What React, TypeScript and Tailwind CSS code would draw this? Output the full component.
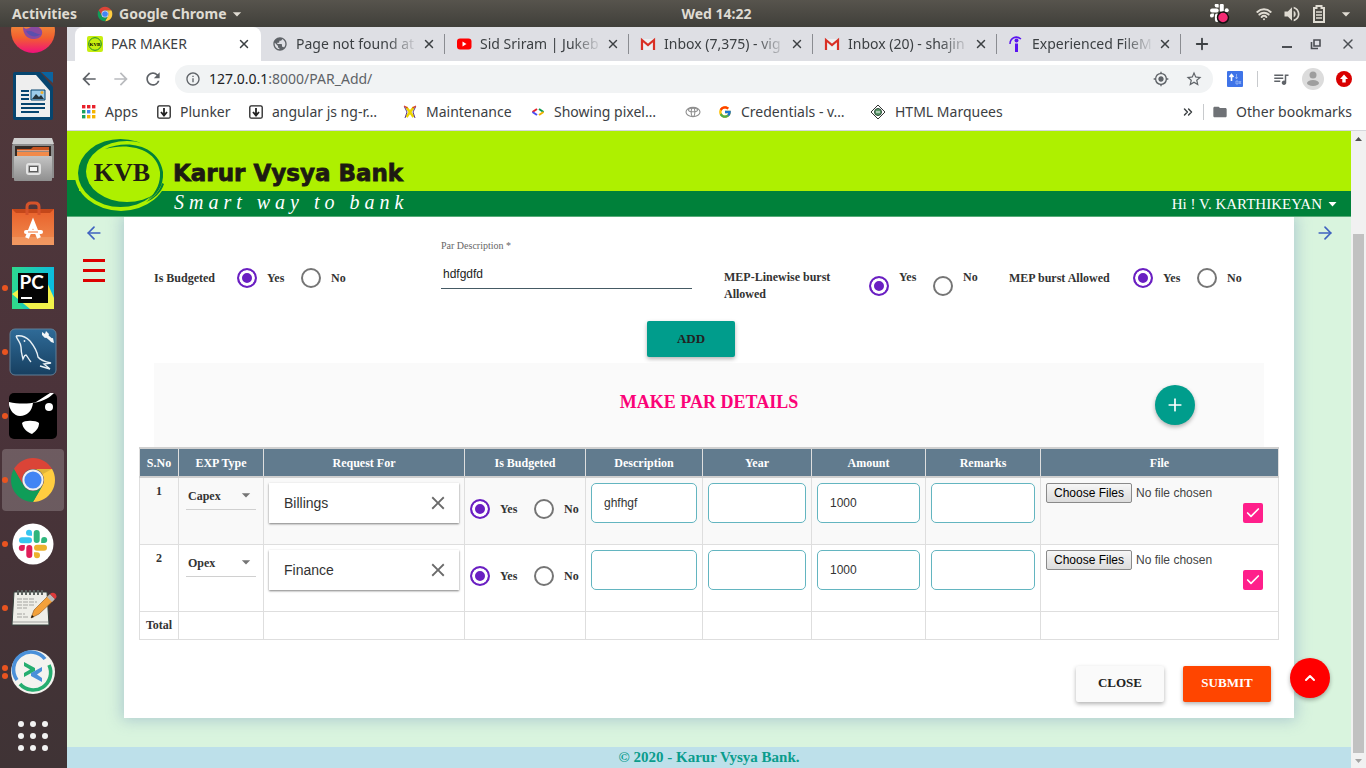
import React from "react";
import { ArrowLeft, ArrowRight, Check, ChevronUp, ChevronsRight, Plus, Wifi, X } from "lucide-react";
import { FcGoogle } from "react-icons/fc";
import {
  MdArrowBack,
  MdArrowDropDown,
  MdArrowForward,
  MdClose,
  MdFolder,
  MdGpsFixed,
  MdInfoOutline,
  MdOutlineStarBorder,
  MdPublic,
  MdQueueMusic,
  MdRefresh,
  MdVolumeUp,
} from "react-icons/md";

/* ---------- drawn icons ---------- */

function ChromeLogo({ className }: { className: string }) {
  const sector = "M4.95 13A22 22 0 0 1 43.05 13L24 13A11 11 0 0 0 14.47 29.5Z";
  return (
    <svg viewBox="0 0 48 48" className={className} aria-hidden="true">
      <path d={sector} fill="#db4437" />
      <path d={sector} fill="#ffcd40" transform="rotate(120 24 24)" />
      <path d={sector} fill="#0f9d58" transform="rotate(240 24 24)" />
      <path d="M24 13h19l-9 5z" fill="#000" opacity=".12" />
      <circle cx="24" cy="24" r="10.6" fill="#f1f1f1" />
      <circle cx="24" cy="24" r="8.6" fill="#4285f4" />
    </svg>
  );
}

function SlackMark({ colours }: { colours: string[] }) {
  return (
    <>
      {colours.map((c, i) => (
        <g key={i} fill={c} transform={`rotate(${i * 90} 24 24)`}>
          <rect x="24.7" y="10" width="6" height="13" rx="3" />
          <path d="M32.2 23v-3a3 3 0 1 1 3 3z" />
        </g>
      ))}
    </>
  );
}

const slackColours = ["#2eb67d", "#ecb22e", "#e01e5a", "#36c5f0"];

function FirefoxIcon() {
  return (
    <svg viewBox="0 0 48 48" className="size-12 shrink-0" aria-hidden="true">
      <defs>
        <linearGradient id="fx" x1="0" y1="0" x2="0" y2="1">
          <stop offset="0.3" stopColor="#f0913b" />
          <stop offset="0.65" stopColor="#f2602f" />
          <stop offset="1" stopColor="#f0107c" />
        </linearGradient>
      </defs>
      <circle cx="24" cy="24" r="22" fill="url(#fx)" />
      <path d="M14 20c4 4 6 0 11-1 5 0 9 3 8 8-1 4-5 5-9 5-6 0-10-5-10-12z" fill="#8a4aa0" />
      <path d="M17 24c3 6 10 7 15 3-5 1-8-4-15-3z" fill="#5a4fae" />
    </svg>
  );
}

function WriterIcon() {
  return (
    <svg viewBox="0 0 48 52" className="h-[52px] w-12" aria-hidden="true">
      <path d="M6 2h25l13 15v31a2 2 0 0 1-2 2H6a2 2 0 0 1-2-2V4a2 2 0 0 1 2-2z" fill="#06456f" />
      <path d="M32 2h12v11z" fill="#0b64a0" />
      <path d="M7 5h20l14 16v26H7z" fill="#eeeeee" />
      <path d="M12 21h8M12 25h8M12 29h8M12 34h24M12 38h24M12 42h18" stroke="#06456f" strokeWidth="2" />
      <path d="M22 20h14v10H22z" fill="#9ccbea" stroke="#06456f" />
      <path d="M23 29l4-5 3 3 2-2 3 4z" fill="#26343c" />
      <circle cx="33" cy="22.5" r="1.5" fill="#f0b030" />
    </svg>
  );
}

function FilesIcon() {
  return (
    <svg viewBox="0 0 48 48" className="size-12" aria-hidden="true">
      <defs>
        <linearGradient id="cab" x1="0" y1="0" x2="0" y2="1">
          <stop offset="0" stopColor="#c4c4c4" />
          <stop offset="1" stopColor="#8f8f8f" />
        </linearGradient>
      </defs>
      <path d="M5 4h38l2 6v32H3V10z" fill="#8e8e8e" />
      <path d="M5 2h38l2 6H3z" fill="#cfcfcf" />
      <path d="M6 10h36v12H6z" fill="#332a26" />
      <path d="M8 13h14l2-2h16v4H8z" fill="#c95420" />
      <path d="M8 16h32v5H8z" fill="#f28a4a" />
      <path d="M8 15h32" stroke="#ffe6d6" />
      <rect x="5" y="20" width="38" height="25" rx="1" fill="url(#cab)" />
      <rect x="18" y="28" width="13" height="10" rx="2" fill="none" stroke="#e4e4e4" strokeWidth="2" />
      <rect x="20.5" y="30.5" width="8" height="5" fill="#f5f5f5" stroke="#5c5c5c" />
    </svg>
  );
}

function SoftwareIcon() {
  return (
    <svg viewBox="0 0 48 48" className="size-12" aria-hidden="true">
      <defs>
        <linearGradient id="bag" x1="0" y1="0" x2="0" y2="1">
          <stop offset="0" stopColor="#e8602a" />
          <stop offset="1" stopColor="#f08c50" />
        </linearGradient>
      </defs>
      <path d="M3 9h42v36H3z" fill="url(#bag)" />
      <path d="M3 9h42l-4 4H7z" fill="#c4471a" />
      <path d="M3 37h42v8H3z" fill="#f2a06c" opacity=".6" />
      <path d="M18 15V7q0-4 4-4h4q4 0 4 4v8" fill="none" stroke="#d5532a" strokeWidth="3" />
      <path d="M18 38l6-15 6 15" fill="none" stroke="#fff" strokeWidth="4" />
      <path d="M17 32h15" stroke="#fff" strokeWidth="4" strokeLinecap="round" />
      <path d="M19 32h10" stroke="#f07030" />
    </svg>
  );
}

function PyCharmIcon() {
  return (
    <svg viewBox="0 0 48 48" className="size-12" aria-hidden="true">
      <defs>
        <linearGradient id="pc" x1="0" y1="0" x2="1" y2="0.2">
          <stop offset="0" stopColor="#2fd98c" />
          <stop offset="1" stopColor="#0bbde0" />
        </linearGradient>
      </defs>
      <path d="M3 3h42v42H3z" fill="url(#pc)" />
      <path d="M3 30l20-14h14l8 18v11H21z" fill="#f2f24a" />
      <path d="M3 33l12 12H3z" fill="#2fd98c" />
      <path d="M9 9h30v30H9z" fill="#050505" />
      <text x="10.5" y="25" fontFamily="Lato, sans-serif" fontWeight="700" fontSize="19" fill="#fff">PC</text>
      <path d="M12 34h11" stroke="#fff" strokeWidth="2" />
    </svg>
  );
}

function WorkbenchIcon() {
  return (
    <svg viewBox="0 0 48 48" className="size-12" aria-hidden="true">
      <defs>
        <linearGradient id="wb" x1="0" y1="0" x2="0" y2="1">
          <stop offset="0" stopColor="#2f6b98" />
          <stop offset="1" stopColor="#173f60" />
        </linearGradient>
      </defs>
      <rect x="1" y="1" width="46" height="46" rx="5" fill="url(#wb)" stroke="#5f7f97" />
      <path
        d="M7 8c5-1 10 1 14 5 4 5 7 9 8 16 3 4 8 5 13 6l-7 1 6 5-10-3M7 8c2 5 5 7 5 11 0 5 1 8 2 12 1-2 1-4 3-4 2 2 3 5 5 7"
        fill="none"
        stroke="#e8f0f5"
        strokeWidth="1.4"
      />
      <circle cx="15.5" cy="13" r=".9" fill="#e8f0f5" />
      <path d="M36 6.500l7 6" stroke="#f3f6f8" strokeWidth="3" />
      <path d="M33 4v3l3 3 3-1 1-3-3-3-1 3zM45 15l-3-1-1-3 3-1z" fill="#f3f6f8" />
    </svg>
  );
}

function EyepatchIcon() {
  return (
    <svg viewBox="0 0 48 48" className="size-12" aria-hidden="true">
      <rect x="0" y="1" width="48" height="46" rx="5" fill="#000" />
      <path d="M0 10c9 2 20 2 27 0l14-9h4c-4 4-9 8-21 10-1 8-6 13-13 13C5 24 1 18 0 13z" fill="#fff" />
      <circle cx="40" cy="15" r="4" fill="#fff" />
      <path d="M13 31c2-3 14-3 17 0 0 5-3 8-7 11-5-2-9-5-10-11z" fill="#fff" />
    </svg>
  );
}

function SlackIcon() {
  return (
    <svg viewBox="0 0 48 48" className="size-12" aria-hidden="true">
      <circle cx="24" cy="24" r="20.5" fill="#fff" />
      <SlackMark colours={slackColours} />
    </svg>
  );
}

function NotesIcon() {
  return (
    <svg viewBox="0 0 48 48" className="size-12" aria-hidden="true">
      <path d="M5 8h33l2 33H3z" fill="#eeeee8" stroke="#35403c" />
      <path d="M4 38h35" stroke="#c8c8c4" strokeWidth="2" />
      <path d="M8 15h17M8 18h20M8 21h18M8 24h10M8 30h8M8 33h12" stroke="#a4a4a0" strokeDasharray="5 1" />
      <path d="M9 6v5M13 6v5M17 6v5M21 6v5M25 6v5M29 6v5M33 6v5" stroke="#5c625f" strokeWidth="2" />
      <path d="M22 34l3-8L40 11l5 5-15 14z" fill="#f3a13a" stroke="#8c561c" strokeWidth=".6" />
      <path d="M38 13l3-3 5 5-3 3z" fill="#b9b9b9" />
      <path d="M41 10c3-3 8 0 6 4l-1 1z" fill="#dd3a3a" />
      <path d="M22 34l1-3 2 2z" fill="#111" />
    </svg>
  );
}

function RemoteIcon() {
  return (
    <svg viewBox="0 0 48 48" className="size-12" aria-hidden="true">
      <circle cx="24" cy="24" r="22" fill="#f4f3ef" />
      <path d="M8 32A17.500 17.500 0 0 1 36 11" fill="none" stroke="#4a90d9" strokeWidth="3.6" />
      <path d="M40 17A17.500 17.500 0 0 1 11 36" fill="none" stroke="#25ae70" strokeWidth="3.6" />
      <path d="M15 14l11 6v3l-11 6v-4l6-3.500-6-3.500z" fill="#25ae70" />
      <path d="M33 19l-11 6v3l11 6v-4l-5-3.500 5-3.500z" fill="#4a90d9" />
    </svg>
  );
}

function GridIcon() {
  return (
    <svg viewBox="0 0 48 48" className="size-12" aria-hidden="true">
      {[12, 24, 36].map((y) => [12, 24, 36].map((x) => <circle key={`${x}-${y}`} cx={x} cy={y} r="3" fill="#f2f2f2" />))}
    </svg>
  );
}

const dock: { name: string; icon: React.ReactNode; dots: number; active?: boolean }[] = [
  { name: "Writer", icon: <WriterIcon />, dots: 0 },
  { name: "Files", icon: <FilesIcon />, dots: 0 },
  { name: "Software", icon: <SoftwareIcon />, dots: 0 },
  { name: "PyCharm", icon: <PyCharmIcon />, dots: 1 },
  { name: "Workbench", icon: <WorkbenchIcon />, dots: 1 },
  { name: "Viewer", icon: <EyepatchIcon />, dots: 1 },
  { name: "Chrome", icon: <ChromeLogo className="size-12" />, dots: 1, active: true },
  { name: "Slack", icon: <SlackIcon />, dots: 1 },
  { name: "Notes", icon: <NotesIcon />, dots: 1 },
  { name: "Remote", icon: <RemoteIcon />, dots: 2 },
  { name: "Show applications", icon: <GridIcon />, dots: 0 },
];

/* ---------- desktop ---------- */

function TopBar() {
  return (
    <div className="grid h-[27px] shrink-0 grid-cols-[1fr_auto_1fr] items-center bg-linear-to-b from-[#57544d] to-[#403f3a] text-sm font-bold text-[#dfdbd2]">
      <div className="flex items-center pl-3">
        <button>Activities</button>
        <button className="flex items-center gap-1.5 pl-5">
          <ChromeLogo className="size-4" />
          Google Chrome
          <MdArrowDropDown className="-ml-1.5 size-5" />
        </button>
      </div>
      <span className="pl-[67px]">Wed 14:22</span>
      <div className="flex items-center justify-end gap-2.5 pr-2.5">
        <svg viewBox="0 0 20 20" className="mr-4 size-5" aria-hidden="true">
          <g transform="translate(-6.5 -7) scale(.66)">
            <SlackMark colours={["#fff", "#fff", "#fff", "#fff"]} />
          </g>
          <circle cx="13" cy="13.5" r="5.500" fill="#f32b74" stroke="#111" strokeWidth="1.500" />
        </svg>
        <Wifi className="size-4" strokeWidth={3} />
        <MdVolumeUp className="size-5" />
        <svg viewBox="0 0 14 18" className="h-[18px] w-3.5" aria-hidden="true">
          <path d="M4.500 1h5v2H12v14H2V3h2.500z" fill="none" stroke="#dfdbd2" strokeWidth="2" />
          <path d="M4 7h6M4 10h6M4 13h6" stroke="#dfdbd2" strokeWidth="1.500" />
        </svg>
        <MdArrowDropDown className="size-5" />
      </div>
    </div>
  );
}

function Dock() {
  return (
    <nav className="w-[67px] shrink-0 overflow-hidden bg-linear-to-b from-[#50393b] via-[#4b333a] to-[#3f3335] pr-px">
      <div className="flex h-[37px] items-end justify-center overflow-hidden pb-[9px]">
        <FirefoxIcon />
      </div>
      {dock.map((d) => (
        <div key={d.name} className="relative flex h-16 items-center justify-center">
          <button
            aria-label={d.name}
            className={
              d.active
                ? "flex size-[62px] items-center justify-center rounded-sm bg-white/20"
                : "flex size-[62px] items-center justify-center"
            }
          >
            {d.icon}
          </button>
          <div className="absolute left-0.5 flex flex-col gap-0.5">
            {Array.from({ length: d.dots }, (_, i) => (
              <span key={i} className="size-1.5 rounded-full bg-[#e95420]" />
            ))}
          </div>
        </div>
      ))}
    </nav>
  );
}

/* ---------- browser ---------- */

function KvbFavicon() {
  return (
    <svg viewBox="0 0 16 16" className="size-4 shrink-0" aria-hidden="true">
      <rect width="16" height="16" rx="2" fill="#c8ee10" />
      <circle cx="8" cy="8" r="6.3" fill="none" stroke="#1c8a2e" />
      <text x="8" y="10" textAnchor="middle" fontSize="5" fontWeight="700" fontFamily="Liberation Serif, serif">KVB</text>
    </svg>
  );
}

function YoutubeIcon() {
  return (
    <svg viewBox="0 0 16 16" className="size-4 shrink-0" aria-hidden="true">
      <rect x="1" y="2.5" width="14.5" height="11" rx="3" fill="#f00" />
      <path d="M6.500 5.500v5l4-2.500z" fill="#fff" />
    </svg>
  );
}

function GmailIcon() {
  return (
    <svg viewBox="0 0 16 16" className="size-4 shrink-0" aria-hidden="true">
      <path d="M1 3h14v11H1z" fill="#eceff1" />
      <path d="M2 14V4l6 5 6-5v10" fill="none" stroke="#d93025" strokeWidth="2.2" />
    </svg>
  );
}

function IndeedIcon() {
  return (
    <svg viewBox="0 0 16 16" className="size-4 shrink-0" aria-hidden="true">
      <path d="M2 8C2 2 8-1 13 3" fill="none" stroke="#5a14f0" strokeWidth="1.5" />
      <circle cx="8.5" cy="4.5" r="2" fill="#5a14f0" />
      <path d="M8.500 7.500V16" stroke="#5a14f0" strokeWidth="3" />
    </svg>
  );
}

const tabs = [
  { title: "Page not found at", icon: <MdPublic className="size-4 shrink-0 text-[#5f6368]" /> },
  { title: "Sid Sriram | Jukeb", icon: <YoutubeIcon /> },
  { title: "Inbox (7,375) - vig", icon: <GmailIcon /> },
  { title: "Inbox (20) - shajin", icon: <GmailIcon /> },
  { title: "Experienced FileM", icon: <IndeedIcon /> },
];

function TabStrip() {
  return (
    <div className="flex h-[34px] shrink-0 bg-[#dedfe4] pl-2 text-[#3c4043]">
      <div className="flex w-[186px] shrink-0 items-center gap-2 rounded-t-lg bg-white px-3">
        <KvbFavicon />
        <span className="flex-1">PAR MAKER</span>
        <button aria-label="Close tab" className="-mr-0.5">
          <X className="size-3.5" strokeWidth={2.5} />
        </button>
      </div>
      {tabs.map((t) => (
        <div key={t.title} className="flex w-[184px] shrink-0 items-center pl-[11px]">
          {t.icon}
          <span className="ml-2 w-[122px] whitespace-nowrap [mask-image:linear-gradient(to_right,#000_75%,transparent)]">
            {t.title}
          </span>
          <button aria-label="Close tab" className="ml-1">
            <X className="size-3.5" strokeWidth={2.5} />
          </button>
          <span className="ml-auto h-5 w-px bg-[#8a8c91]" />
        </div>
      ))}
      <button aria-label="New tab" className="ml-3 flex items-center">
        <Plus className="size-[18px]" strokeWidth={2.4} />
      </button>
      <div className="ml-auto flex items-center gap-[18px] pr-2.5 text-[#4b4e53]">
        <button aria-label="Minimise" className="mt-1.5 h-0.5 w-2.5 bg-[#4b4e53]" />
        <button aria-label="Restore">
          <svg viewBox="0 0 12 12" className="size-3" fill="none" stroke="#4b4e53" strokeWidth="1.6" aria-hidden="true">
            <path d="M4 2h6v6H4zM1.500 4v6.500H8" />
          </svg>
        </button>
        <button aria-label="Close">
          <X className="size-4" strokeWidth={2.2} />
        </button>
      </div>
    </div>
  );
}

function Toolbar() {
  return (
    <div className="flex h-9 shrink-0 items-center bg-white pr-3.5 pl-3 text-[#5f6368]">
      <div className="flex items-center gap-3">
        <button aria-label="Back"><MdArrowBack className="size-5" /></button>
        <button aria-label="Forward" className="text-[#b9bbbe]"><MdArrowForward className="size-5" /></button>
        <button aria-label="Reload"><MdRefresh className="size-5" /></button>
      </div>
      <div className="ml-3 flex h-7 flex-1 items-center rounded-full bg-[#f1f3f4] px-2.5">
        <MdInfoOutline className="size-4" />
        <span className="ml-2 text-[#202124]">127.0.0.1</span>
        <input aria-label="Address" readOnly value=":8000/PAR_Add/" className="min-w-0 flex-1 bg-transparent outline-none" />
        <MdGpsFixed className="mr-4 size-4" />
        <MdOutlineStarBorder className="size-[18px]" />
      </div>
      <svg viewBox="0 0 16 16" className="ml-3.5 size-4" aria-hidden="true">
        <rect width="16" height="16" rx="1" fill="#3f74e8" />
        <path d="M4.500 10V4M2.500 6l2-2.500 2 2.500" fill="none" stroke="#fff" strokeWidth="1.6" />
        <path d="M9.500 3v5M8.500 6l1 2 1-2M9 10h2v3H9zM12 10l2 3M14 10l-2 3" fill="none" stroke="#9fbcf8" strokeWidth=".8" />
      </svg>
      <span className="mx-3.5 h-4 w-px bg-[#c8cacd]" />
      <MdQueueMusic className="size-[18px]" />
      <svg viewBox="0 0 22 22" className="ml-3 size-[22px]" aria-hidden="true">
        <circle cx="11" cy="11" r="11" fill="#dcdcdc" />
        <circle cx="11" cy="7" r="3.5" fill="#9e9e9e" />
        <ellipse cx="11" cy="15" rx="6" ry="3" fill="#9e9e9e" />
      </svg>
      <svg viewBox="0 0 16 16" className="ml-3 size-4" aria-hidden="true">
        <circle cx="8" cy="8" r="8" fill="#d90000" />
        <path d="M8 3.500l4 4.500H9.700v3.500H6.300V8H4z" fill="#fff" />
      </svg>
    </div>
  );
}

function DownloadBox() {
  return (
    <svg viewBox="0 0 14 14" className="size-3.5 shrink-0" fill="none" stroke="#222" aria-hidden="true">
      <rect x=".8" y=".8" width="12.4" height="12.4" rx="1.5" strokeWidth="1.3" />
      <path d="M7 3v7M4 7l3 3.500L10 7" strokeWidth="1.8" />
    </svg>
  );
}

const bookmarks: { title: string; icon: React.ReactNode; width: string }[] = [
  {
    title: "Apps",
    width: "w-[75px]",
    icon: (
      <svg viewBox="0 0 14 14" className="size-3.5 shrink-0" aria-hidden="true">
        {["#e8202a", "#e8202a", "#e8202a", "#1aa260", "#4285f4", "#f4b400", "#1aa260", "#f4b400", "#f4b400"].map((c, i) => (
          <rect key={i} x={(i % 3) * 5} y={Math.floor(i / 3) * 5} width="3.4" height="3.4" fill={c} />
        ))}
      </svg>
    ),
  },
  { title: "Plunker", width: "w-[92px]", icon: <DownloadBox /> },
  { title: "angular js ng-r…", width: "w-[154px]", icon: <DownloadBox /> },
  {
    title: "Maintenance",
    width: "w-[128px]",
    icon: (
      <svg viewBox="0 0 14 14" className="size-3.5 shrink-0" aria-hidden="true">
        <path d="M3 2l4 5 4-5M3.500 12L7 7l3.500 5" fill="none" stroke="#ecd400" strokeWidth="2.6" />
        <path d="M1 1l3.500 2M13 1l-3.500 2" stroke="#d9302a" strokeWidth="1.2" />
        <path d="M1.500 2l2.500 5-2 6M12.500 2L10 7l2 6" fill="none" stroke="#5a3a8a" strokeWidth="1" />
      </svg>
    ),
  },
  {
    title: "Showing pixel…",
    width: "w-[154px]",
    icon: (
      <svg viewBox="0 0 14 14" className="size-3.5 shrink-0" fill="none" strokeWidth="2" aria-hidden="true">
        <path d="M6 4L1.500 7" stroke="#e8202a" />
        <path d="M1.500 7L6 10" stroke="#4b4bf0" />
        <path d="M8 4l4.500 3" stroke="#0a9a50" />
        <path d="M12.500 7L8 10" stroke="#f0b400" />
      </svg>
    ),
  },
  {
    title: "",
    width: "w-[33px]",
    icon: (
      <svg viewBox="0 0 16 12" className="h-3 w-4 shrink-0" fill="none" stroke="#8f8f8f" strokeWidth="1.1" aria-hidden="true">
        <ellipse cx="8" cy="6" rx="7" ry="4.6" />
        <ellipse cx="8" cy="4" rx="4.5" ry="1.8" />
        <ellipse cx="8" cy="6" rx="1.8" ry="4.5" />
      </svg>
    ),
  },
  { title: "Credentials - v…", width: "w-[154px]", icon: <FcGoogle className="size-3.5 shrink-0" /> },
  {
    title: "HTML Marquees",
    width: "w-[150px]",
    icon: (
      <svg viewBox="0 0 16 16" className="-ml-0.5 size-4 shrink-0" fill="none" aria-hidden="true">
        <path d="M8 1l7 7-7 7-7-7z" stroke="#333" />
        <circle cx="8" cy="8" r="3.5" fill="#5d9a6c" stroke="#2d4a38" />
        <path d="M6 8h4" stroke="#fff" />
      </svg>
    ),
  },
];

function BookmarksBar() {
  return (
    <div className="flex h-[34px] shrink-0 items-center border-b border-[#d5d7dc] bg-white pr-3.5 pb-1 pl-[15px] text-[#3c4043]">
      {bookmarks.map((b, i) => (
        <a key={i} href="#" aria-label={b.title || "Bookmark"} className={`flex shrink-0 items-center gap-[9px] whitespace-nowrap ${b.width}`}>
          {b.icon}
          {b.title}
        </a>
      ))}
      <button aria-label="More bookmarks" className="ml-auto">
        <ChevronsRight className="size-3.5" strokeWidth={2.5} />
      </button>
      <span className="mx-2 h-4 w-px bg-[#c8cacd]" />
      <a href="#" className="flex items-center gap-2 whitespace-nowrap">
        <MdFolder className="size-4 text-[#6f7276]" />
        Other bookmarks
      </a>
    </div>
  );
}

/* ---------- page ---------- */

function BankHeader() {
  return (
    <header className="relative shrink-0 border-b border-[#58ab78] bg-[#00813a]">
      <div className="h-[60px] bg-[#aef000]" />
      <div className="flex h-[25px] items-center justify-end pr-3.5">
        <button className="flex items-center gap-1 pt-0.5 text-[15px] text-white">
          Hi ! V. KARTHIKEYAN
          <svg viewBox="0 0 9 5" className="ml-0.5 h-[5px] w-[9px]" aria-hidden="true"><path d="M.5 0h8l-4 4.500z" fill="#fff" /></svg>
        </button>
      </div>
      <svg viewBox="0 0 360 85" className="absolute top-0 left-0 h-[85px] w-[360px]" role="img" aria-label="Karur Vysya Bank">
        <path d="M0 49h12v12H0z" fill="#00813a" />
        <ellipse cx="54" cy="42" rx="46.500" ry="38" fill="#aef000" />
        <ellipse cx="53.500" cy="42" rx="42.500" ry="34" fill="#00813a" />
        <ellipse cx="60" cy="40.500" rx="41" ry="30.500" fill="#aef000" />
        <path d="M38 18C60 8 92 14 96 41C97 56 89 64 81 69C90 60 93.500 52 93 41C90 18 62 11 38 18Z" fill="#00813a" />
        <path d="M95 52c-2 8-8 14-16 19 8-3 15-9 18-18z" fill="#00813a" />
        <text x="55" y="50" textAnchor="middle" fontFamily="Liberation Serif, serif" fontWeight="700" fontSize="26" fill="#211c12">KVB</text>
        <text x="106" y="50" fontFamily="DejaVu Sans, sans-serif" fontWeight="700" fontSize="23" fill="#1d1a12" stroke="#1d1a12" strokeWidth=".8">Karur Vysya Bank</text>
        <text x="107" y="78" fontFamily="Liberation Serif, serif" fontStyle="italic" fontSize="20" fill="#fff" className="tracking-[5px]">Smart way to bank</text>
      </svg>
    </header>
  );
}

const radioClass =
  "size-5 shrink-0 cursor-pointer appearance-none rounded-full border-2 border-[#757575] bg-white checked:border-[#6a1fc2] checked:bg-[#6a1fc2] checked:shadow-[inset_0_0_0_3px_#fff]";

function YesNo({ name, low }: { name: string; low?: boolean }) {
  const row = low ? "flex items-start gap-2.5" : "flex items-center gap-2.5";
  const radio = low ? `mt-[7px] ${radioClass}` : radioClass;
  return (
    <div className="flex shrink-0 font-bold">
      <label className={`w-16 ${row}`}>
        <input type="radio" name={name} defaultChecked className={radio} />
        Yes
      </label>
      <label className={row}>
        <input type="radio" name={name} className={radio} />
        No
      </label>
    </div>
  );
}

function ParForm() {
  return (
    <div className="grid h-[104px] grid-cols-4 pt-[22px] text-xs leading-[17px] font-bold">
      <div className="mt-[18px] flex h-[42px] items-center px-[15px]">
        <span className="w-[83px]">Is Budgeted</span>
        <YesNo name="budgeted" />
      </div>
      <div className="px-[17px]">
        <label htmlFor="par-description" className="block text-[10px] leading-[14px] font-normal text-[#666]">
          Par Description *
        </label>
        <input
          id="par-description"
          defaultValue="hdfgdfd"
          className="h-9 w-full border-b border-[#455a64] bg-transparent px-0.5 pt-1.5 text-xs font-normal text-[#222] outline-none [font-family:'Liberation_Sans',sans-serif]"
        />
      </div>
      <div className="mt-[18px] flex h-[42px] items-start px-[15px] pt-3">
        <span className="w-[145px] pr-6">MEP-Linewise burst Allowed</span>
        <YesNo name="mep-linewise" low />
      </div>
      <div className="mt-[18px] flex h-[42px] items-center px-[15px]">
        <span className="w-[124px]">MEP burst Allowed</span>
        <YesNo name="mep-burst" />
      </div>
    </div>
  );
}

const columns = [
  { title: "S.No", width: "w-[39px]" },
  { title: "EXP Type", width: "w-[85px]" },
  { title: "Request For", width: "w-[201px]" },
  { title: "Is Budgeted", width: "w-[121px]" },
  { title: "Description", width: "w-[117px]" },
  { title: "Year", width: "w-[109px]" },
  { title: "Amount", width: "w-[114px]" },
  { title: "Remarks", width: "w-[115px]" },
  { title: "File", width: "w-auto" },
];

const rows = [
  { type: "Capex", request: "Billings", description: "ghfhgf", amount: "1000" },
  { type: "Opex", request: "Finance", description: "", amount: "1000" },
];

function CellInput({ label, value }: { label: string; value: string }) {
  return (
    <td className="border border-[#dedede] p-[5px]">
      <input
        aria-label={label}
        defaultValue={value}
        className="block h-10 w-full rounded-[5px] border border-[#63b5c0] bg-white px-3 text-[#333] outline-none [font-family:'Liberation_Sans',sans-serif]"
      />
    </td>
  );
}

function ParTable() {
  const cell = "border border-[#dedede]";
  return (
    <table className="w-full table-fixed border-collapse text-xs">
      <thead>
        <tr className="h-[29px] border-t-2 border-b-2 border-[#d0d0d0] bg-[#617b8e] text-white">
          {columns.map((c) => (
            <th key={c.title} className={`border-x border-[#dedede] font-bold ${c.width}`}>
              {c.title}
            </th>
          ))}
        </tr>
      </thead>
      <tbody>
        {rows.map((r, i) => (
          <tr key={r.type} className="h-[67px] align-top odd:bg-[#f9f9f9]">
            <td className={`${cell} pt-[5px] text-center font-bold`}>{i + 1}</td>
            <td className={`${cell} px-[7px] pt-[5px]`}>
              <div className="relative">
                <select
                  aria-label="Expense type"
                  defaultValue={r.type}
                  className="block h-[27px] w-full appearance-none border-b border-[#d0d0d0] bg-transparent px-0.5 font-bold"
                >
                  <option>Capex</option>
                  <option>Opex</option>
                </select>
                <MdArrowDropDown className="pointer-events-none absolute top-0.5 right-0 size-5 text-[#757575]" />
              </div>
            </td>
            <td className={`${cell} p-[5px]`}>
              <div className="flex h-10 items-center bg-white pr-2.5 pl-[15px] shadow-[0_1px_2px_rgba(0,0,0,0.5)]">
                <input
                  aria-label="Request for"
                  defaultValue={r.request}
                  className="min-w-0 flex-1 bg-transparent text-sm text-[#333] outline-none [font-family:'Liberation_Sans',sans-serif]"
                />
                <button aria-label="Clear">
                  <MdClose className="size-[22px] text-[#6a6a6a]" />
                </button>
              </div>
            </td>
            <td className={`${cell} px-[5px] pt-[21px]`}>
              <YesNo name={`row-${i}`} />
            </td>
            <CellInput label="Description" value={r.description} />
            <CellInput label="Year" value="" />
            <CellInput label="Amount" value={r.amount} />
            <CellInput label="Remarks" value="" />
            <td className={`${cell} px-[5px] pt-[5px]`}>
              <input
                type="file"
                multiple
                aria-label="Files"
                className="block h-5 w-full text-[#444] [font-family:'Liberation_Sans',sans-serif] file:mr-1 file:h-5 file:rounded-xs file:border file:border-solid file:border-[#8a8a8a] file:bg-linear-to-b file:from-[#f6f6f6] file:to-[#dcdcdc] file:px-[7px] file:text-black"
              />
              <div className="relative mr-2.5 ml-auto flex size-5 items-center justify-center">
                <input
                  type="checkbox"
                  aria-label="Include row"
                  defaultChecked
                  className="size-5 appearance-none rounded-xs bg-[#ff1f8b]"
                />
                <Check className="pointer-events-none absolute size-4 text-white" strokeWidth={2.5} />
              </div>
            </td>
          </tr>
        ))}
        <tr className="h-7">
          <td className={`${cell} text-center font-bold`}>Total</td>
          {columns.slice(1).map((c) => (
            <td key={c.title} className={cell} />
          ))}
        </tr>
      </tbody>
    </table>
  );
}

const raised = "shadow-[0_2px_4px_rgba(0,0,0,0.3)]";

function ParCard() {
  return (
    <section className="min-w-0 flex-1 bg-white px-[15px] pb-4 shadow-[0_0_14px_2px_rgba(120,150,190,0.45)]">
      <ParForm />
      <div className="flex justify-center pr-9">
        <button className={`h-9 w-[88px] rounded-xs bg-[#009d8c] text-[13px] font-bold text-[#222] ${raised}`}>ADD</button>
      </div>
      <div className="mx-[15px] mt-1.5 grid h-[84px] grid-cols-[1fr_auto_1fr] items-center bg-[#fafafa]">
        <h2 className="col-start-2 pb-1.5 text-lg font-bold text-[#fb0277]">MAKE PAR DETAILS</h2>
        <button aria-label="Add row" className={`mr-[69px] flex size-10 items-center justify-center justify-self-end rounded-full bg-[#009d8c] ${raised}`}>
          <Plus className="size-5 text-white" strokeWidth={2} />
        </button>
      </div>
      <ParTable />
      <div className="mt-[26px] flex justify-end gap-[19px] pr-2 text-[13px] font-bold">
        <button className={`h-9 w-[88px] rounded-xs bg-[#fafafa] text-[#222] ${raised}`}>CLOSE</button>
        <button className={`h-9 w-[88px] rounded-xs bg-[#ff4500] text-white ${raised}`}>SUBMIT</button>
      </div>
    </section>
  );
}

function BankPage() {
  return (
    <div className="relative flex min-w-0 flex-1 flex-col bg-[#d9f4de] text-[#333] [font-family:'Liberation_Serif',serif]">
      <div className="relative z-10">
        <BankHeader />
      </div>
      <main className="flex flex-1 items-start">
        <div className="flex w-[57px] shrink-0 flex-col items-center gap-4 pt-1.5 pr-1">
          <button aria-label="Previous" className="text-[#3f62c0]">
            <ArrowLeft className="size-5" />
          </button>
          <button aria-label="Menu" className="flex w-[22px] flex-col gap-[7px]">
            <span className="h-[3px] w-full bg-[#dd0000]" />
            <span className="h-[3px] w-full bg-[#dd0000]" />
            <span className="h-[3px] w-full bg-[#dd0000]" />
          </button>
        </div>
        <ParCard />
        <div className="flex w-[57px] shrink-0 justify-center pt-1.5 pl-1">
          <button aria-label="Next" className="text-[#3f62c0]">
            <ArrowRight className="size-5" />
          </button>
        </div>
      </main>
      <footer className="relative h-[21px] shrink-0 bg-[#bde0ea] text-center text-[15px] leading-5 font-bold text-[#0a9c8c]">
        © 2020 - Karur Vysya Bank.
      </footer>
      <button
        aria-label="Scroll to top"
        className={`absolute right-[21px] bottom-[70px] flex size-10 items-center justify-center rounded-full bg-[#ff0000] ${raised}`}
      >
        <ChevronUp className="size-4 text-white" strokeWidth={3} />
      </button>
    </div>
  );
}

function Scrollbar() {
  return (
    <div className="flex w-[15px] shrink-0 flex-col items-center bg-[#f1f1f1]">
      <svg viewBox="0 0 15 15" className="size-[15px]" aria-hidden="true"><path d="M4 10h7L7.500 6z" fill="#505050" /></svg>
      <div className="mt-[88px] w-[11px] flex-1 bg-[#c1c1c1]" />
      <svg viewBox="0 0 15 15" className="size-[15px]" aria-hidden="true"><path d="M4 6h7l-3.500 4z" fill="#a3a3a3" /></svg>
    </div>
  );
}

export default function App() {
  return (
    <div className="flex min-h-screen flex-col text-sm [font-family:'Noto_Sans',sans-serif]">
      <TopBar />
      <div className="flex flex-1">
        <Dock />
        <div className="flex min-w-0 flex-1 flex-col overflow-hidden">
          <TabStrip />
          <Toolbar />
          <BookmarksBar />
          <div className="flex flex-1">
            <BankPage />
            <Scrollbar />
          </div>
        </div>
      </div>
    </div>
  );
}
